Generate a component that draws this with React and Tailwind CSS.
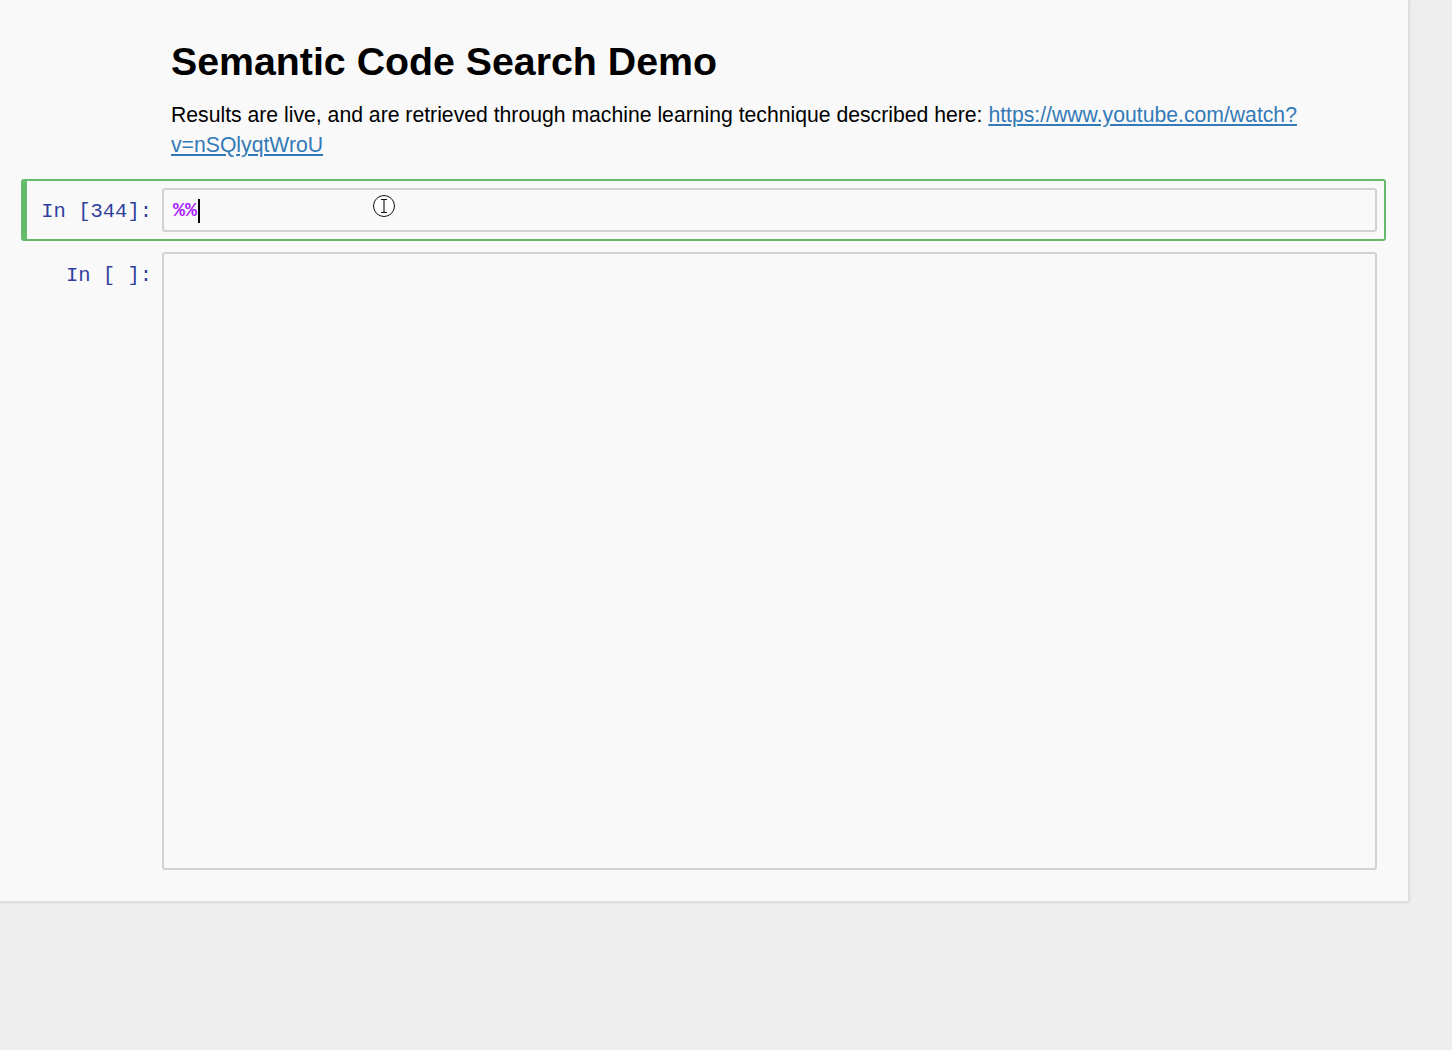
import React from 'react';

const mono = { fontFamily: '"Liberation Mono", "DejaVu Sans Mono", monospace' };

function Prompt({ label }) {
  return (
    <div
      className="h-[44px] w-[128px] shrink-0 pr-[10px] text-right text-[20.5px] leading-[48px] text-[#303f9f]"
      style={mono}
    >
      {label}
    </div>
  );
}

function CodeCell({ label, selected, tall, children }) {
  return (
    <div
      className={
        'flex items-start rounded-[3px] border-2 border-l-[6px] p-[7px] ' +
        (selected ? 'border-[#66bb6a]' : 'border-transparent')
      }
    >
      <Prompt label={label} />
      <div
        className={
          'relative flex-1 rounded-[3px] border-2 border-[#d2d2d2] bg-[#f9f9f9] px-[9px] ' +
          (tall ? 'h-[618px]' : 'h-[44px]')
        }
      >
        {children}
      </div>
    </div>
  );
}

export default function App() {
  return (
    <div className="min-h-[1050px] bg-[#eeeeee]" style={{ fontFamily: '"Liberation Sans", Arial, sans-serif' }}>
      <div className="w-[1408px] bg-[#f9f9f9] pl-[21px] pr-[22px] pt-[40px] pb-[22px] shadow-[1px_1px_2px_1px_rgba(0,0,0,0.08)]">
        <div className="pl-[150px]">
          <h1 className="text-[39.3px] font-bold leading-[42px] text-black">Semantic Code Search Demo</h1>
          <p className="mt-[18px] text-[21.2px] leading-[30px] text-black">
            Results are live, and are retrieved through machine learning technique described here:{' '}
            <a href="#" className="text-[#337ab7] underline">
              https://www.youtube.com/watch?
              <br />
              v=nSQlyqtWroU
            </a>
          </p>
        </div>

        <div className="mt-[19px]">
          <CodeCell label="In [344]:" selected>
            <div className="flex h-full items-center pt-[2px]">
              <span className="text-[20px] font-bold leading-[24px] text-[#aa22ff]" style={mono}>%%</span>
              <span className="ml-[1px] h-[24px] w-[2px] bg-black" />
            </div>
            <svg
              className="absolute left-[208px] top-[4px]"
              width="24"
              height="24"
              viewBox="0 0 24 24"
              fill="none"
              stroke="#111"
            >
              <circle cx="12" cy="12" r="10.5" strokeWidth="1" fill="#fff" />
              <path d="M9 5.5h2.2M12.8 5.5H15M12 6.3v11.4M9 18.5h2.2M12.8 18.5H15M11.2 5.5l.8.8.8-.8M11.2 18.5l.8-.8.8.8" strokeWidth="1.1" />
            </svg>
          </CodeCell>
          <div className="mt-[2px]">
            <CodeCell label="In [ ]:" tall />
          </div>
        </div>
      </div>
    </div>
  );
}
